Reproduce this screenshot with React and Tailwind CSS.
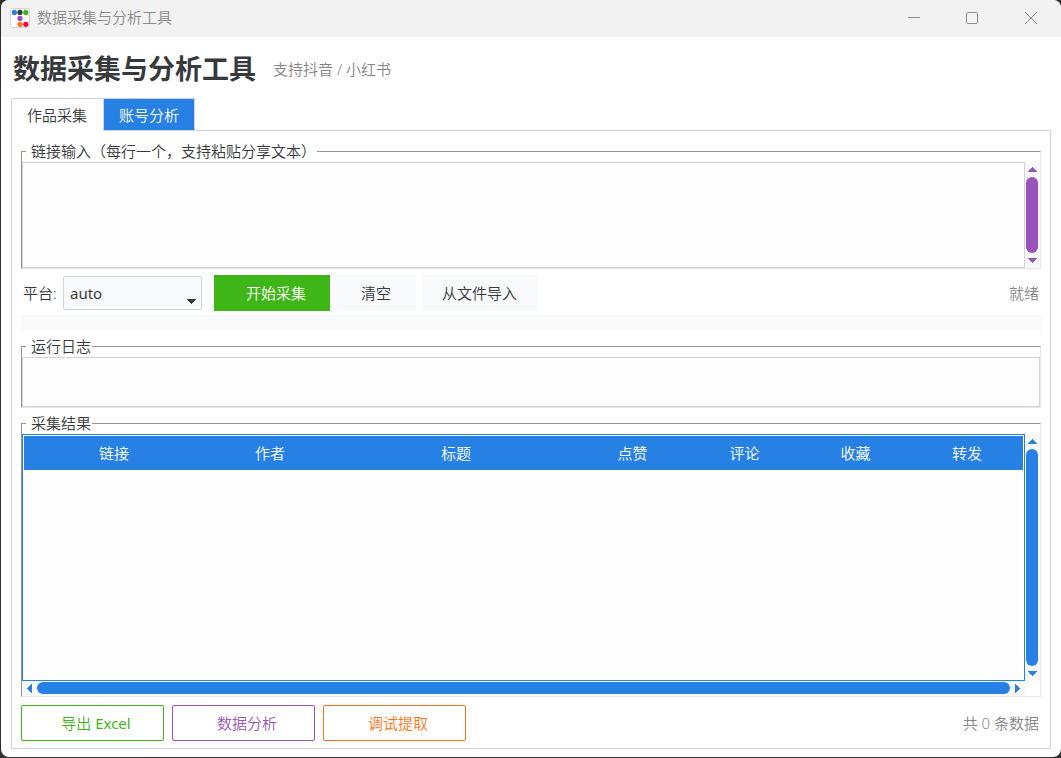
import React, { useState } from 'react'

const columns = ['链接', '作者', '标题', '点赞', '评论', '收藏', '转发']

function Arrow({ dir, className = '' }) {
  const points = {
    up: '4.5,0 9,5 0,5',
    down: '0,0 9,0 4.5,5',
    left: '5,0 5,9 0,4.5',
    right: '0,0 5,4.5 0,9',
  }
  const vertical = dir === 'up' || dir === 'down'
  return (
    <svg width={vertical ? 9 : 5} height={vertical ? 5 : 9} className={`shrink-0 fill-current ${className}`} shapeRendering="crispEdges">
      <polygon points={points[dir]} />
    </svg>
  )
}

function VScroll({ className = '' }) {
  return (
    <div className={`w-[15px] shrink-0 flex flex-col items-center pt-[5px] pb-[5px] pr-px bg-[#f8f9fb] ${className}`}>
      <Arrow dir="up" />
      <div className="w-3 flex-1 mt-[5px] mb-[5px] rounded-full bg-current" />
      <Arrow dir="down" />
    </div>
  )
}

function Group({ title, className = '', children }) {
  return (
    <fieldset className={`min-w-0 border border-t-[#959595] border-l-[#959595] border-r-[#e6e6e6] border-b-[#e6e6e6] flex flex-col ${className}`}>
      <legend className="ml-1 pl-[5px] pr-px h-[21px] leading-5 whitespace-nowrap">{title}</legend>
      {children}
    </fieldset>
  )
}

function OutlineButton({ className, children }) {
  return <button className={`w-[143px] h-9 border rounded-[2px] pl-[7px] ${className}`}>{children}</button>
}

function TitleBar() {
  return (
    <div className="h-[37px] shrink-0 bg-[#f2f2f2] flex items-center pl-[9px] text-[#8b8b8b]">
      <svg width="20" height="20" className="-mt-px">
        <rect x="0.5" y="0.5" width="19" height="19" rx="2" fill="#fff" stroke="#d4d4d4" />
        <circle cx="4.4" cy="4.4" r="2.6" fill="#2780e3" />
        <circle cx="10" cy="4.4" r="2.6" fill="#373a3c" />
        <circle cx="15.8" cy="4.4" r="2.6" fill="#3fb618" />
        <circle cx="10" cy="10.4" r="2.6" fill="#9954bb" />
        <circle cx="10" cy="16.3" r="2.6" fill="#ff7518" />
        <circle cx="15.8" cy="16.3" r="2.6" fill="#ff0039" />
      </svg>
      <span className="ml-[7px] flex-1 leading-5 -mt-[3px]">数据采集与分析工具</span>
      <svg width="12" height="12" className="mr-[46px] -mt-0.5" stroke="currentColor" shapeRendering="crispEdges">
        <path d="M0 5.5H12" />
      </svg>
      <svg width="12" height="12" className="mr-[47px] -mt-px" stroke="currentColor" fill="none">
        <rect x="0.5" y="0.5" width="11" height="11" rx="1" />
      </svg>
      <svg width="12" height="12" className="mr-6 -mt-px" stroke="currentColor" fill="none">
        <path d="M0 0L12 12M12 0L0 12" />
      </svg>
    </div>
  )
}

export default function App() {
  const [links, setLinks] = useState('')

  return (
    <div className="w-[1061px] h-[758px] bg-[#303033] pl-px pb-px overflow-hidden font-['Noto_Sans','Noto_Sans_CJK_SC',sans-serif] font-[350] text-[15px] text-[#373a3c]">
      <div className="h-full bg-white rounded-[8px] overflow-hidden flex flex-col">
        <TitleBar />

        <div className="h-[61px] shrink-0 flex items-center pl-3 pt-[3px]">
          <h1 className="text-[27px] leading-8 font-bold">数据采集与分析工具</h1>
          <span className="ml-[17px] -mt-px leading-5 text-[#868686]">支持抖音 / 小红书</span>
        </div>

        <div className="flex h-8 shrink-0 pl-[10px]">
          <button className="relative z-10 w-[92px] h-[33px] pr-px bg-white border border-b-0 border-r-0 border-[#ced4da] rounded-tl-[2px]">作品采集</button>
          <button className="w-[92px] pt-px border-x border-t border-[#ced4da] bg-[#2780e3] text-white">账号分析</button>
        </div>

        <div className="mx-[10px] mb-2 flex-1 min-h-0 border border-[#ced4da] px-[9px] pt-[10px] pb-[7px] flex flex-col">
          <Group title="链接输入（每行一个，支持粘贴分享文本）" className="h-32">
            <div className="flex h-[106px]">
              <textarea
                value={links}
                onChange={(e) => setLinks(e.target.value)}
                className="flex-1 resize-none bg-[#fdfdfd] border border-[#ced4da] outline-none p-1"
              />
              <VScroll className="text-[#9954bb]" />
            </div>
          </Group>

          <div className="flex items-center h-9 mt-[6px] shrink-0">
            <span className="pl-[2px] w-[42px] whitespace-nowrap">平台:</span>
            <div className="w-[139px] h-[34px] bg-[#f8f9fb] border border-[#ced4da] rounded-[2px] flex items-center justify-between pl-[6px] pr-[5px]">
              <span className="font-normal">auto</span>
              <Arrow dir="down" className="mt-4" />
            </div>
            <button className="ml-3 w-[116px] h-9 pl-2 bg-[#3fb618] text-white">开始采集</button>
            <button className="ml-[6px] w-20 h-9 bg-[#f8f9fb]">清空</button>
            <button className="ml-[6px] w-[116px] h-9 pr-px bg-[#f8f9fb]">从文件导入</button>
            <span className="ml-auto pr-[2px] text-[#868686]">就绪</span>
          </div>

          <div className="h-4 mt-1 shrink-0 bg-[#f8f9fb]" />

          <Group title="运行日志" className="mt-[5px] h-[72px]">
            <div className="h-[50px] bg-[#fdfdfd] border border-[#ced4da]" />
          </Group>

          <Group title="采集结果" className="mt-[5px] h-[284px]">
            <div className="flex h-[247px]">
              <div className="flex-1 border border-[#2780e3] bg-[#fdfdfd] p-px">
                <div className="grid grid-cols-[180px_132px_240px_113px_111px_111px_112px] h-[34px] items-center text-center bg-[#2780e3] text-white">
                  {columns.map((c) => <span key={c}>{c}</span>)}
                </div>
              </div>
              <VScroll className="text-[#2780e3]" />
            </div>
            <div className="flex items-center h-[15px] w-[1003px] pb-px pl-[5px] pr-[5px] bg-[#f8f9fb] text-[#2780e3]">
              <Arrow dir="left" />
              <div className="h-3 flex-1 ml-[5px] mr-[5px] rounded-full bg-current" />
              <Arrow dir="right" />
            </div>
          </Group>

          <div className="flex items-center gap-2 mt-2 h-9 shrink-0">
            <OutlineButton className="border-[#3fb618] text-[#3fb618]">导出 <span className="font-normal">Excel</span></OutlineButton>
            <OutlineButton className="border-[#9954bb] text-[#9954bb]">数据分析</OutlineButton>
            <OutlineButton className="border-[#ff7518] text-[#ff7518]">调试提取</OutlineButton>
            <span className="ml-auto pr-[2px] text-[#868686]">共 0 条数据</span>
          </div>
        </div>
      </div>
    </div>
  )
}
